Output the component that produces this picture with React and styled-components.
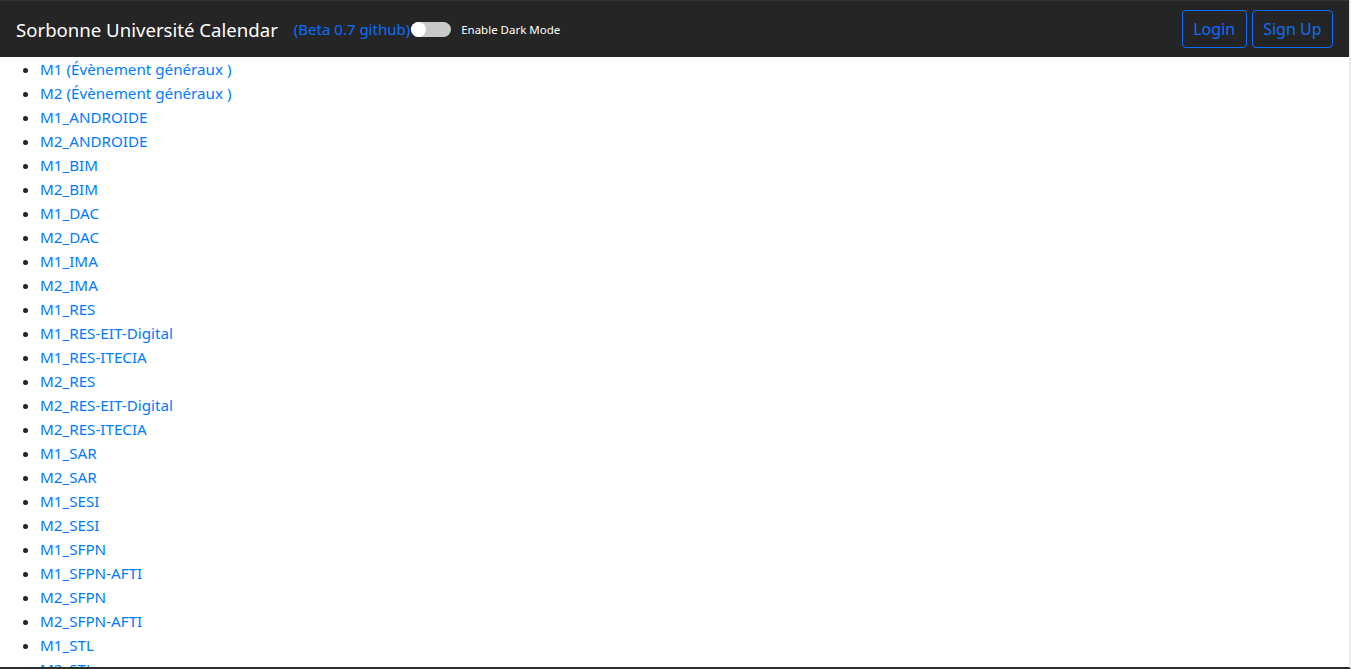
import React, { useState } from 'react';
import styled, { createGlobalStyle } from 'styled-components';

const formations = [
  'M1 (Évènement généraux )',
  'M2 (Évènement généraux )',
  'M1_ANDROIDE',
  'M2_ANDROIDE',
  'M1_BIM',
  'M2_BIM',
  'M1_DAC',
  'M2_DAC',
  'M1_IMA',
  'M2_IMA',
  'M1_RES',
  'M1_RES-EIT-Digital',
  'M1_RES-ITECIA',
  'M2_RES',
  'M2_RES-EIT-Digital',
  'M2_RES-ITECIA',
  'M1_SAR',
  'M2_SAR',
  'M1_SESI',
  'M2_SESI',
  'M1_SFPN',
  'M1_SFPN-AFTI',
  'M2_SFPN',
  'M2_SFPN-AFTI',
  'M1_STL',
  'M2_STL',
  'M1_MIND',
  'M2_MIND',
];

const GlobalStyle = createGlobalStyle`
  html, body {
    margin: 0;
    padding: 0;
    overflow: hidden;
  }
  body {
    font-family: "Noto Sans", "Open Sans", sans-serif;
    color: #212529;
    background: #fff;
  }
  * {
    box-sizing: border-box;
  }
`;

const Frame = styled.div`
  height: 669px;
  overflow: hidden;
  border-right: 2px solid #ececec;
  border-bottom: 2px solid #2b2b2b;
  background: #fff;
`;

const Navbar = styled.nav`
  display: flex;
  align-items: center;
  height: 57px;
  padding: 0 16px;
  background: #252525;
  border-top: 1px solid #333;
`;

const Brand = styled.a`
  color: #fff;
  font-size: 18.6px;
  text-decoration: none;
  margin-right: 16px;
  white-space: nowrap;
`;

const BetaLink = styled.a`
  color: #0d6efd;
  font-size: 15px;
  text-decoration: none;
  white-space: nowrap;
`;

const Toggle = styled.button`
  display: flex;
  align-items: center;
  justify-content: ${(p) => (p.on ? 'flex-end' : 'flex-start')};
  width: 40px;
  height: 15px;
  padding: 0;
  margin: 0 10px 0 1px;
  border: none;
  border-radius: 8px;
  background: ${(p) => (p.on ? '#0d6efd' : '#c9c9c9')};
  cursor: pointer;
`;

const Knob = styled.span`
  width: 15px;
  height: 15px;
  border-radius: 50%;
  background: #fff;
`;

const ToggleLabel = styled.span`
  color: #fff;
  font-size: 11.5px;
  white-space: nowrap;
`;

const Actions = styled.div`
  display: flex;
  gap: 5px;
  margin-left: auto;
`;

const OutlineButton = styled.button`
  height: 38px;
  padding: 0 10.5px;
  font-family: inherit;
  font-size: 16px;
  color: #0d6efd;
  background: transparent;
  border: 1px solid #0d6efd;
  border-radius: 4px;
  cursor: pointer;
`;

const List = styled.ul`
  margin: 0;
  padding-left: 40px;
`;

const Item = styled.li`
  font-size: 15.2px;
  line-height: 24px;
`;

const ItemLink = styled.a`
  color: #007bff;
  text-decoration: none;
`;

export default function App() {
  const [dark, setDark] = useState(false);

  return (
    <>
      <GlobalStyle />
      <Frame>
        <Navbar>
          <Brand href="#">Sorbonne Université Calendar</Brand>
          <BetaLink href="#">(Beta 0.7 github)</BetaLink>
          <Toggle on={dark ? 1 : 0} onClick={() => setDark(!dark)} aria-label="Enable Dark Mode">
            <Knob />
          </Toggle>
          <ToggleLabel>Enable Dark Mode</ToggleLabel>
          <Actions>
            <OutlineButton>Login</OutlineButton>
            <OutlineButton>Sign Up</OutlineButton>
          </Actions>
        </Navbar>
        <List>
          {formations.map((name) => (
            <Item key={name}>
              <ItemLink href="#">{name}</ItemLink>
            </Item>
          ))}
        </List>
      </Frame>
    </>
  );
}
